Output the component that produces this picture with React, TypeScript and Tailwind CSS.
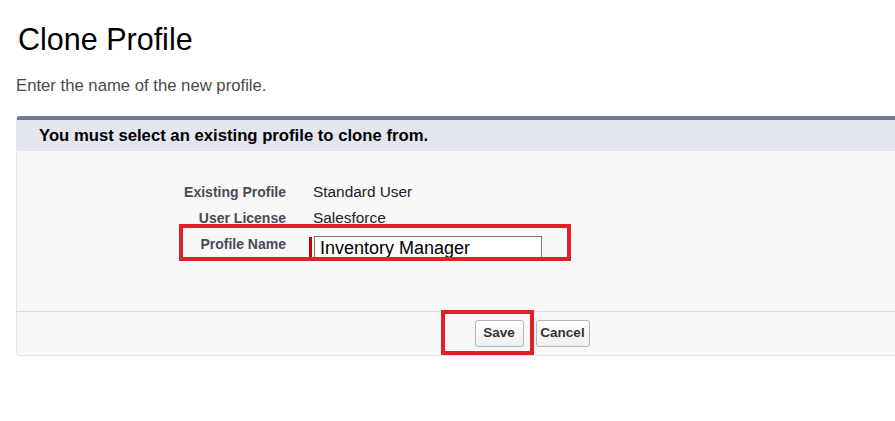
export default function App() {
  const font = { fontFamily: '"Liberation Sans", Arial, sans-serif' };
  return (
    <div className="w-[895px] h-[421px] bg-white overflow-hidden" style={font}>
      <h1 className="pt-[24px] pl-[18px] text-[30.5px] leading-[30px] font-normal text-[#000]">Clone Profile</h1>
      <p className="mt-[22px] pl-[16px] text-[16.7px] leading-[20px] text-[#4a4a4a]">Enter the name of the new profile.</p>

      <div className="mt-[20px] ml-[16px] w-[1031px] border-t-[4px] border-t-[#747b92] border-l border-l-[#e6e6e6] border-b border-b-[#e0e0e0] rounded-[4px] bg-[#f8f8f8]">
        <div className="h-[31px] bg-[#e3e6ef] flex items-center pl-[22px]">
          <span className="text-[16.7px] font-bold text-[#000]">You must select an existing profile to clone from.</span>
        </div>

        <div className="relative h-[160px] pt-[28px]">
          <div className="grid grid-cols-[269px_1fr] gap-x-[22px]">
            <div className="h-[26px] text-right text-[14px] font-bold leading-[26px] text-[#4a4a56]">Existing Profile</div>
            <div className="h-[26px] text-[15.4px] leading-[26px] text-[#222] pl-[5px]">Standard User</div>
            <div className="h-[26px] text-right text-[14px] font-bold leading-[26px] text-[#4a4a56]">User License</div>
            <div className="h-[26px] text-[15.4px] leading-[26px] text-[#222] pl-[5px]">Salesforce</div>
            <div className="h-[26px] text-right text-[14px] font-bold leading-[26px] text-[#4a4a56]">Profile Name</div>
            <div className="h-[26px] flex items-start pt-[5px] pl-[1px]">
              <div className="w-[3px] h-[22px] mt-[1px] bg-[#c00]" />
              <div className="ml-[2px] w-[228px] h-[23px] bg-white border border-[#7a7a7a] flex items-center pl-[5px] text-[18px] leading-[20px] text-[#000]">
                Inventory Manager
              </div>
            </div>
          </div>
          <div className="absolute left-[162px] top-[73px] w-[392px] h-[37px] border-[4px] border-[#e3202a]" />
        </div>

        <div className="relative h-[44px] border-t border-t-[#dcdcdc] flex items-center justify-center gap-[12px]">
          <button className="w-[49px] h-[27px] rounded-[3px] border border-[#b5b5b5] bg-gradient-to-b from-white to-[#efefef] text-[13.5px] font-bold text-[#333]" style={font}>Save</button>
          <button className="w-[54px] h-[27px] rounded-[3px] border border-[#b5b5b5] bg-gradient-to-b from-white to-[#efefef] text-[13.5px] font-bold text-[#333]" style={font}>Cancel</button>
          <div className="absolute left-[424px] top-[-2px] w-[93px] h-[45px] border-[4px] border-[#e3202a]" />
        </div>
      </div>
    </div>
  );
}
